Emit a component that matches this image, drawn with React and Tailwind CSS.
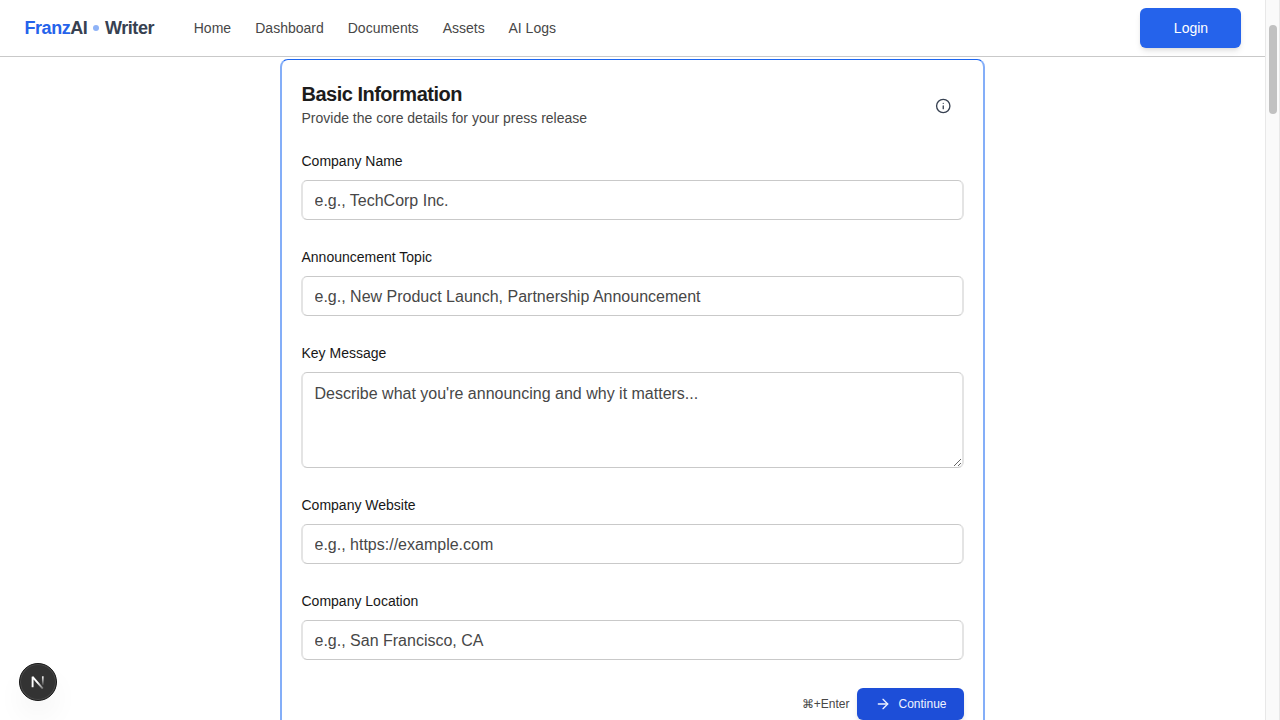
import { ArrowRight, Info } from 'lucide-react';

const NAV = [
  ['Home', 'w-[37.5px]'],
  ['Dashboard', 'w-[68.5px]'],
  ['Documents', 'w-[71px]'],
  ['Assets', 'w-[41.75px]'],
  ['AI Logs', 'w-[48px]'],
];

const CONTROL =
  'block w-full rounded-md border-x-2 border-y border-x-[#e4e4e4] border-y-[#c9c9c9] bg-white pl-[11.5px] pr-3 text-base text-[#171717] placeholder:text-[#474747] placeholder:opacity-100 outline-none';

function Field({ label, placeholder, multiline }) {
  return (
    <label className="block">
      <span className="block h-5 pl-[0.5px] text-sm leading-5 text-[#171717]">{label}</span>
      {multiline ? (
        <textarea placeholder={placeholder} className={`${CONTROL} mt-[9px] h-24 resize-y pb-2 pt-[9px] leading-6`} />
      ) : (
        <input placeholder={placeholder} className={`${CONTROL} mt-[9px] h-10 pt-0.5`} />
      )}
    </label>
  );
}

function Header() {
  return (
    <header className="flex h-[57px] shrink-0 items-center border-b border-[#c9c9c9] bg-white pb-px pl-6 pr-6">
      <div className="flex w-[130px] items-center pl-[0.5px] text-lg font-bold leading-7 tracking-[-0.45px] text-[#374151]">
        <span className="text-[#2563eb]">Franz</span>
        <span>AI</span>
        <span className="mx-1.5 size-1.5 rounded-full bg-[#8fb3f7]" />
        <span>Writer</span>
      </div>
      <nav className="ml-[39.75px] flex gap-6 text-sm leading-5 text-[#474747]">
        {NAV.map(([name, width]) => (
          <a key={name} className={`${width} whitespace-nowrap`}>{name}</a>
        ))}
      </nav>
      <button className="ml-auto mt-px h-10 w-[101px] rounded-md bg-[#2563eb] pl-px text-sm text-white shadow-md">Login</button>
    </header>
  );
}

function Card() {
  return (
    <section className="mx-auto mt-0.5 h-[700px] w-[705px] shrink-0 rounded-lg border border-x-2 border-[#1d66f0] border-x-[#84aef8] bg-white px-[19px] pt-5">
      <div className="flex h-[50px] items-center justify-between pl-[0.5px] pr-[12.5px]">
        <div className="-mt-0.5">
          <h2 className="h-7 text-xl font-bold leading-[26px] tracking-[-0.5px] text-[#1c1c1c]">Basic Information</h2>
          <p className="-mt-px text-sm leading-5 text-[#474747]">Provide the core details for your press release</p>
        </div>
        <Info className="mt-0.5 h-4 w-[16.5px] text-[#374151]" strokeWidth={2} />
      </div>
      <div className="mt-[21px] flex flex-col gap-[27px]">
        <Field label="Company Name" placeholder="e.g., TechCorp Inc." />
        <Field label="Announcement Topic" placeholder="e.g., New Product Launch, Partnership Announcement" />
        <Field label="Key Message" placeholder="Describe what you're announcing and why it matters..." multiline />
        <Field label="Company Website" placeholder="e.g., https://example.com" />
        <Field label="Company Location" placeholder="e.g., San Francisco, CA" />
      </div>
      <div className="mt-7 flex items-center justify-end gap-[7.5px] text-xs leading-4">
        <span className="text-[#474747]">⌘+Enter</span>
        <button className="flex h-8 w-[107px] items-center rounded-md bg-[#1d4ed8] pl-[17.5px] text-[#eef3ff] shadow-md">
          <ArrowRight className="mr-2 size-4" />
          Continue
        </button>
      </div>
    </section>
  );
}

export default function App() {
  return (
    <div className="relative flex h-screen overflow-hidden bg-white font-['Liberation_Sans',Arial,sans-serif]">
      <div className="flex w-[1265px] flex-col overflow-hidden">
        <Header />
        <Card />
      </div>
      <div className="w-[15px] border-x border-[#e8e8e8] bg-[#fafafa] pl-[3px] pt-[25px]">
        <div className="h-[89px] w-2 rounded-full bg-[#c1c1c1]" />
      </div>
      <div className="absolute bottom-[19px] left-[19px] flex size-[38px] items-center justify-center rounded-full border border-[#171717] bg-[#333] shadow-[inset_0_0_0_1px_#4a4a4a,0_16px_32px_-8px_rgba(0,0,0,0.12)]">
        <svg width="14" height="14" viewBox="0 0 14 14" fill="none">
          <defs>
            <linearGradient id="diagonal" x1="7" y1="7" x2="12.5" y2="14" gradientUnits="userSpaceOnUse">
              <stop stopColor="#fff" />
              <stop offset="1" stopColor="#fff" stopOpacity="0.25" />
            </linearGradient>
            <linearGradient id="stem" x1="11" y1="1" x2="11" y2="11" gradientUnits="userSpaceOnUse">
              <stop stopColor="#fff" />
              <stop offset="1" stopColor="#fff" stopOpacity="0" />
            </linearGradient>
          </defs>
          <path d="M1.6 12.3V1.8L11.8 13.6" stroke="url(#diagonal)" strokeWidth="1.9" strokeLinejoin="bevel" />
          <path d="M11.8 1.3v9" stroke="url(#stem)" strokeWidth="1.7" />
        </svg>
      </div>
    </div>
  );
}
